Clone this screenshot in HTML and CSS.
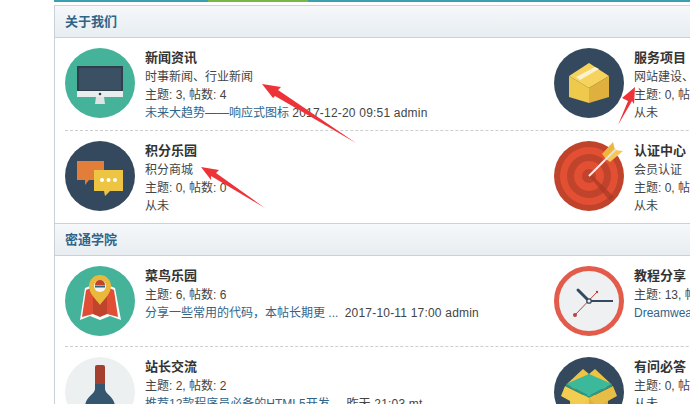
FILE: index.html
```html
<!DOCTYPE html>
<html lang="zh-CN">
<head>
  <meta charset="UTF-8">
  <title>论坛</title>
  <link rel="stylesheet" href="styles.css">
</head>
<body>
  <div class="page">
    <!-- Top colour bar -->
    <div class="top-bar"><span class="top-bar-green"></span></div>

    <div class="forum">
      <!-- 关于我们 -->
      <h2 class="section-title">关于我们</h2>
      <div class="forum-row">
        <div class="board">
          <svg class="board-icon" viewBox="0 0 70 70">
            <circle cx="35" cy="35" r="35" fill="#45b29a"/>
            <rect x="12" y="18" width="46" height="25" fill="#2f3e4c"/>
            <rect x="14" y="20" width="42" height="22" fill="#3c5064"/>
            <rect x="12" y="43" width="46" height="6" fill="#e9ecec"/>
            <polygon points="31,49 39,49 40,56 30,56" fill="#dfe3e3"/>
            <circle cx="35" cy="46" r="1.3" fill="#2c3a47"/>
          </svg>
          <div class="board-info">
            <div class="board-name">新闻资讯</div>
            <div>时事新闻、行业新闻</div>
            <div>主题: 3, 帖数: 4</div>
            <div><a class="last-post">未来大趋势——响应式图标</a> <span class="post-meta">2017-12-20 09:51 admin</span></div>
          </div>
        </div>
        <div class="board">
          <svg class="board-icon" viewBox="0 0 70 70">
            <circle cx="35" cy="35" r="35" fill="#34495e"/>
            <polygon points="35,15 55,28 35,40 15,28" fill="#f5d35c"/>
            <polygon points="15,28 35,40 35,55 15,49" fill="#efc94c"/>
            <polygon points="55,28 35,40 35,55 55,49" fill="#e0b03f"/>
            <polygon points="22,29 41,19 45,21 26,32" fill="#faf1d0"/>
          </svg>
          <div class="board-info">
            <div class="board-name">服务项目</div>
            <div>网站建设、网站优化</div>
            <div>主题: 0, 帖数: 0</div>
            <div>从未</div>
          </div>
        </div>
      </div>
      <div class="forum-row">
        <div class="board">
          <svg class="board-icon" viewBox="0 0 70 70">
            <circle cx="35" cy="35" r="35" fill="#34495e"/>
            <polygon points="12,20 39,20 39,39 24,39 20,44 20,39 12,39" fill="#e27d3a"/>
            <polygon points="29,29 58,29 58,50 45,50 40,55 39,50 29,50" fill="#eec443"/>
            <circle cx="37" cy="39" r="2" fill="#fff"/>
            <circle cx="43.5" cy="39" r="2" fill="#fff"/>
            <circle cx="50" cy="39" r="2" fill="#fff"/>
          </svg>
          <div class="board-info">
            <div class="board-name">积分乐园</div>
            <div>积分商城</div>
            <div>主题: 0, 帖数: 0</div>
            <div>从未</div>
          </div>
        </div>
        <div class="board">
          <svg class="board-icon" viewBox="0 0 70 70">
            <circle cx="35" cy="35" r="35" fill="#c0432b"/>
            <circle cx="35" cy="35" r="29" fill="#e34f33"/>
            <circle cx="35" cy="35" r="22" fill="#c0432b"/>
            <circle cx="35" cy="35" r="15" fill="#e34f33"/>
            <circle cx="35" cy="35" r="7" fill="#c0432b"/>
            <polygon points="35,35 37,33 60,56 56,60" fill="#a93a26" opacity="0.75"/>
            <polygon points="48,13 59,1 61,9 52,18" fill="#f2b53c"/>
            <polygon points="52,18 61,9 69,10 56,21" fill="#f6c65b"/>
            <line x1="35" y1="35" x2="51" y2="19" stroke="#f4f1ee" stroke-width="2"/>
            <line x1="51" y1="19" x2="62" y2="8" stroke="#d9e8f0" stroke-width="2"/>
          </svg>
          <div class="board-info">
            <div class="board-name">认证中心</div>
            <div>会员认证</div>
            <div>主题: 0, 帖数: 0</div>
            <div>从未</div>
          </div>
        </div>
      </div>

      <!-- 密通学院 -->
      <h2 class="section-title section-next">密通学院</h2>
      <div class="forum-row">
        <div class="board">
          <svg class="board-icon" viewBox="0 0 70 70">
            <circle cx="35" cy="35" r="35" fill="#45b29a"/>
            <polygon points="20,22 28,19 42,19 50,22 56,54 45,50 35,54 25,50 15,54" fill="#fff"/>
            <polygon points="21,24 28,21 28,48 17,51" fill="#e04e35"/>
            <polygon points="28,21 42,21 42,48 35,51 28,48" fill="#c0432b"/>
            <polygon points="42,21 49,24 53,51 42,48" fill="#e04e35"/>
            <path d="M35 39 C31 33 24 28 24 20 A11 11 0 0 1 46 20 C46 28 39 33 35 39Z" fill="#e9b93c"/>
            <circle cx="35" cy="20" r="6" fill="#f4f4f4"/>
            <path d="M30 19 A5 5 0 0 1 40 19Z" fill="#c0432b"/>
            <rect x="30" y="19.5" width="10" height="2" fill="#34607a"/>
          </svg>
          <div class="board-info">
            <div class="board-name">菜鸟乐园</div>
            <div>主题: 6, 帖数: 6</div>
            <div><a class="last-post">分享一些常用的代码，本帖长期更 ...</a> <span class="post-meta post-meta-far">2017-10-11 17:00 admin</span></div>
          </div>
        </div>
        <div class="board">
          <svg class="board-icon" viewBox="0 0 70 70">
            <circle cx="35" cy="35" r="32.5" fill="#eef0f2" stroke="#e25b4b" stroke-width="5"/>
            <line x1="21" y1="49" x2="43" y2="26" stroke="#b9443a" stroke-width="1"/>
            <circle cx="21" cy="49" r="2" fill="#b9443a"/>
            <circle cx="43" cy="26" r="1.2" fill="#b9443a"/>
            <line x1="35" y1="35" x2="24" y2="24" stroke="#34495e" stroke-width="3" stroke-linecap="round"/>
            <line x1="35" y1="35" x2="59" y2="35" stroke="#34495e" stroke-width="2"/>
            <circle cx="35" cy="35" r="2.2" fill="#eef0f2" stroke="#34495e" stroke-width="1.3"/>
          </svg>
          <div class="board-info">
            <div class="board-name">教程分享</div>
            <div>主题: 13, 帖数: 13</div>
            <div><a class="last-post">Dreamweaver</a></div>
          </div>
        </div>
      </div>
      <div class="forum-row">
        <div class="board">
          <svg class="board-icon" viewBox="0 0 70 70">
            <circle cx="35" cy="35" r="35" fill="#ecf0f1"/>
            <path d="M30 10 Q30 8 32 8 L38 8 Q40 8 40 10 L40 27 L30 27Z" fill="#a5402f"/>
            <path d="M30 27 L40 27 L40 32 C40 37 50 40 50 50 L50 70 L20 70 L20 50 C20 40 30 37 30 32Z" fill="#34566e"/>
          </svg>
          <div class="board-info">
            <div class="board-name">站长交流</div>
            <div>主题: 2, 帖数: 2</div>
            <div><a class="last-post">推荐12款程序员必备的HTML5开发 ...</a> <span class="post-meta">昨天 21:03 mt</span></div>
          </div>
        </div>
        <div class="board">
          <svg class="board-icon" viewBox="0 0 70 70">
            <circle cx="35" cy="35" r="35" fill="#34495e"/>
            <polygon points="14,26 29,12 35,17 20,33" fill="#eec443"/>
            <polygon points="56,26 41,12 35,17 50,33" fill="#eec443"/>
            <polygon points="16,38 35,38 35,70 16,70" fill="#efc94c"/>
            <polygon points="54,38 35,38 35,70 54,70" fill="#e0b03f"/>
            <polygon points="35,17 58,27 35,39 12,27" fill="#3cb99a"/>
            <polygon points="12,27 35,39 58,27 58,29 35,41 12,29" fill="#2a9c80"/>
            <polygon points="35,41 11,29 7,39 27,50" fill="#f1cd52"/>
            <polygon points="35,41 59,29 63,39 43,50" fill="#e8bd45"/>
          </svg>
          <div class="board-info">
            <div class="board-name">有问必答</div>
            <div>主题: 0, 帖数: 0</div>
            <div>从未</div>
          </div>
        </div>
      </div>
    </div>
  </div>

  <!-- Red annotation arrows drawn over the page -->
  <svg class="arrows" viewBox="0 0 690 404">
    <polygon points="262,84 281,87 278,90 356,143 275,96 273,98"/>
    <polygon points="635,87 622,98 628,101 618,125 632,101 634,104"/>
    <polygon points="201,167 219,170 216,173 265,208 211,176 211,180"/>
  </svg>
</body>
</html>
```

FILE: styles.css
```css
/* General Reset */
* {
  margin: 0;
  padding: 0;
  box-sizing: border-box;
}

html, body {
  height: 100%;
  width: 100%;
  overflow: hidden;
}

body {
  font-family: "Liberation Sans", "Noto Sans CJK SC", sans-serif;
  font-size: 12px;
  line-height: 18px;
  color: #444;
  background-color: #fff;
}

.page {
  margin-left: 54px;
  width: 990px;
}

/* Top colour bar */
.top-bar {
  height: 2px;
  padding-left: 154px;
  margin-bottom: 3px;
  background-color: #3a9fb0;
}

.top-bar-green {
  display: block;
  width: 100px;
  height: 2px;
  background-color: #7ab648;
}

/* Forum box */
.forum {
  border-left: 1px solid #c8d0d8;
  border-top: 1px solid #c5d8e0;
}

.section-title {
  height: 32px;
  padding-left: 10px;
  font-size: 13px;
  font-weight: bold;
  line-height: 32px;
  color: #2f6489;
  background: linear-gradient(to bottom, #f6f8fa, #e7edf1);
  border-bottom: 1px solid #c2d5df;
}

.section-next {
  height: 33px;
  border-top: 1px solid #c2d5df;
}

.forum-row {
  display: grid;
  grid-template-columns: 489px 489px;
  margin-left: 10px;
  border-bottom: 1px dashed #cdcdcd;
}

.forum-row:nth-of-type(2n) {
  border-bottom: none;
}

.board {
  display: flex;
  gap: 10px;
  padding: 10px 0 8px;
  white-space: nowrap;
}

.board-icon {
  width: 70px;
  height: 70px;
  margin-bottom: 2px;
  flex-shrink: 0;
}

.board-info {
  padding-top: 2px;
}

.board-name {
  margin-top: -1px;
  margin-bottom: 1px;
  font-size: 13px;
  font-weight: bold;
  color: #333;
}

.last-post {
  color: #2f6489;
}

.post-meta {
  letter-spacing: 0.2px;
}

.post-meta-far {
  margin-left: 3px;
}

/* Arrows */
.arrows {
  position: absolute;
  top: 0;
  left: 0;
  width: 690px;
  height: 404px;
  fill: #ee3338;
  pointer-events: none;
}
```
